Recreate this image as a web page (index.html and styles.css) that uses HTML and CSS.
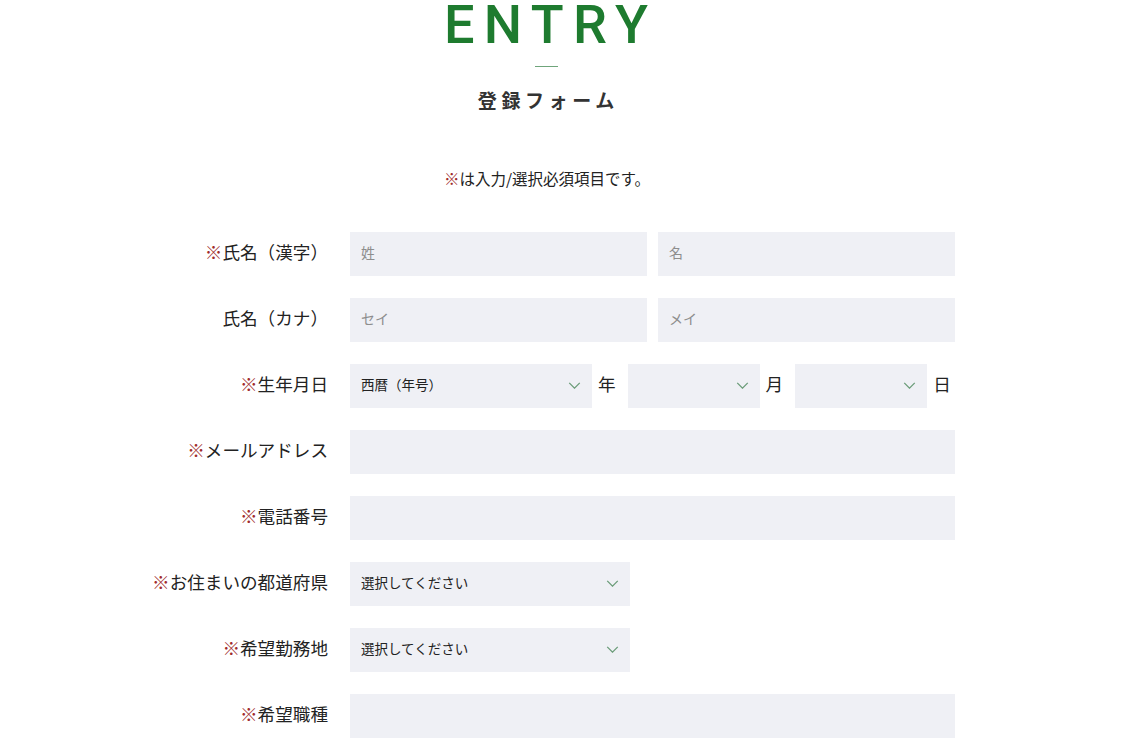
FILE: index.html
```html
<!DOCTYPE html>
<html lang="ja">
<head>
<meta charset="utf-8">
<title>ENTRY 登録フォーム</title>
<link rel="stylesheet" href="styles.css">
</head>
<body>
<div class="page">
  <header class="head">
    <h1 class="title">ENTRY</h1>
    <div class="rule"></div>
    <p class="subtitle">登録フォーム</p>
  </header>
  <p class="note"><span class="req">※</span>は入力/選択必須項目です。</p>

  <form class="form">
    <div class="row">
      <label class="label"><span class="req">※</span>氏名（漢字）</label>
      <div class="pair">
        <input class="field" type="text" placeholder="姓">
        <input class="field" type="text" placeholder="名">
      </div>
    </div>
    <div class="row">
      <label class="label">氏名（カナ）</label>
      <div class="pair">
        <input class="field" type="text" placeholder="セイ">
        <input class="field" type="text" placeholder="メイ">
      </div>
    </div>
    <div class="row">
      <label class="label"><span class="req">※</span>生年月日</label>
      <div class="birth">
        <div class="sel sel-year">
          <select><option>西暦（年号）</option></select>
          <svg class="chev" viewBox="0 0 14 8"><path d="M1 1l6 6 6-6"/></svg>
        </div>
        <span class="unit">年</span>
        <div class="sel sel-small">
          <select><option></option></select>
          <svg class="chev" viewBox="0 0 14 8"><path d="M1 1l6 6 6-6"/></svg>
        </div>
        <span class="unit">月</span>
        <div class="sel sel-small">
          <select><option></option></select>
          <svg class="chev" viewBox="0 0 14 8"><path d="M1 1l6 6 6-6"/></svg>
        </div>
        <span class="unit unit-last">日</span>
      </div>
    </div>
    <div class="row">
      <label class="label"><span class="req">※</span>メールアドレス</label>
      <input class="field" type="email">
    </div>
    <div class="row">
      <label class="label"><span class="req">※</span>電話番号</label>
      <input class="field" type="tel">
    </div>
    <div class="row">
      <label class="label"><span class="req">※</span>お住まいの都道府県</label>
      <div class="sel sel-mid">
        <select><option>選択してください</option></select>
        <svg class="chev" viewBox="0 0 14 8"><path d="M1 1l6 6 6-6"/></svg>
      </div>
    </div>
    <div class="row">
      <label class="label"><span class="req">※</span>希望勤務地</label>
      <div class="sel sel-mid">
        <select><option>選択してください</option></select>
        <svg class="chev" viewBox="0 0 14 8"><path d="M1 1l6 6 6-6"/></svg>
      </div>
    </div>
    <div class="row">
      <label class="label"><span class="req">※</span>希望職種</label>
      <input class="field" type="text">
    </div>
  </form>
</div>
</body>
</html>
```

FILE: styles.css
```css
* { box-sizing: border-box; }

html, body {
  margin: 0;
  padding: 0;
  background: #fff;
}

body {
  font-family: "Noto Sans CJK JP", "Noto Sans", sans-serif;
  color: #222;
}

.page {
  padding-right: 29px;
  overflow: hidden;
  height: 749px;
}

.head {
  display: flex;
  flex-direction: column;
  align-items: center;
}

.title {
  margin: 0;
  font-family: Roboto, "Liberation Sans", sans-serif;
  font-weight: 500;
  font-size: 54px;
  line-height: 50px;
  letter-spacing: 9.3px;
  padding-left: 9.3px;
  color: #1e7b2f;
}

.rule {
  width: 23px;
  height: 1px;
  margin-top: 16px;
  background: #6fa57b;
}

.subtitle {
  margin: 23px 0 0;
  font-size: 19px;
  line-height: 20px;
  font-weight: 700;
  letter-spacing: 4.6px;
  padding-left: 4.6px;
  color: #333;
}

.note {
  margin: 58px 0 0;
  text-align: center;
  font-size: 15.5px;
  line-height: 20px;
  color: #222;
  padding-left: 2px;
}

.req { color: #a02c2c; }

.form {
  width: 818px;
  margin: 44px auto 0;
  display: flex;
  flex-direction: column;
  gap: 22px;
}

.row {
  display: grid;
  grid-template-columns: 191px 605px;
  column-gap: 22px;
  align-items: center;
  height: 44px;
}

.label {
  text-align: right;
  font-size: 17.6px;
  line-height: 24px;
  padding-bottom: 4px;
  white-space: nowrap;
  color: #222;
}

.pair {
  display: grid;
  grid-template-columns: 1fr 1fr;
  column-gap: 11px;
}

.field {
  display: block;
  width: 100%;
  height: 44px;
  border: 0;
  margin: 0;
  padding: 0 11px 4px;
  background: #eff0f5;
  font-family: inherit;
  font-size: 14px;
  color: #222;
  outline: none;
}

.field::placeholder { color: #8d8d8d; }

.birth {
  display: flex;
  align-items: center;
  height: 44px;
}

.unit {
  font-size: 17.6px;
  line-height: 24px;
  padding-bottom: 4px;
  margin: 0 12px 0 6px;
}

.unit-last { margin-right: 0; }

.sel {
  position: relative;
  height: 44px;
  background: #eff0f5;
}

.sel-year { width: 242px; }
.sel-small { width: 132px; }
.sel-mid { width: 280px; }

.sel select {
  -webkit-appearance: none;
  appearance: none;
  display: block;
  width: 100%;
  height: 44px;
  border: 0;
  margin: 0;
  padding: 0 30px 4px 11px;
  background: transparent;
  font-family: inherit;
  font-size: 13.5px;
  color: #222;
  outline: none;
}

.chev {
  position: absolute;
  right: 11px;
  top: 18px;
  width: 13px;
  height: 7px;
  fill: none;
  stroke: #6b9c79;
  stroke-width: 1.5;
  pointer-events: none;
}
```
